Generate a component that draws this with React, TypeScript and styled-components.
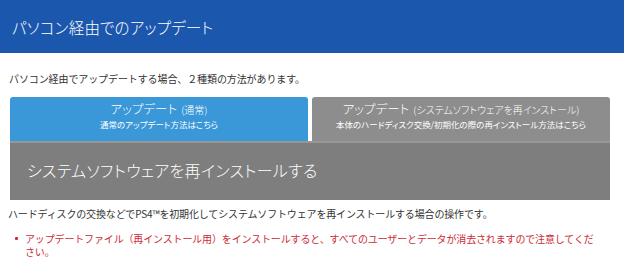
import * as React from "react";
import styled, { createGlobalStyle } from "styled-components";

const GlobalStyle = createGlobalStyle`
  html, body {
    margin: 0;
    padding: 0;
    background: #ffffff;
  }
  body {
    font-family: "Noto Sans CJK JP", "Noto Sans", sans-serif;
    color: #333333;
  }
`;

const SHeader = styled.header`
  height: 53px;
  background: #1c57ae;
  display: flex;
  align-items: center;
  padding: 0 12px;
  box-sizing: border-box;
`;

const STitle = styled.h1`
  margin: 0;
  font-size: 15.5px;
  font-weight: 300;
  font-feature-settings: "palt";
  color: #ffffff;
  letter-spacing: 0.2px;
`;

const SBody = styled.main`
  width: 600px;
  margin-left: 10px;
`;

const SLead = styled.p`
  margin: 18px 0 0 -1px;
  font-size: 10px;
  line-height: 16px;
  letter-spacing: -0.1px;
`;

const STabs = styled.div`
  display: flex;
  gap: 4px;
  margin-top: 10px;
`;

const STab = styled.a<{ $active?: boolean }>`
  flex: 1;
  height: 44px;
  box-sizing: border-box;
  padding-top: 3px;
  border-radius: 3px 3px 0 0;
  background: ${(p) => (p.$active ? "#3a98d8" : "#8d8d8d")};
  color: #ffffff;
  display: flex;
  flex-direction: column;
  align-items: center;
  text-decoration: none;
  font-feature-settings: "palt";
  cursor: pointer;
`;

const STabTitle = styled.span`
  font-size: 12.5px;
  font-weight: 300;
  line-height: 18px;
  & small {
    font-size: 10px;
    margin-left: 4px;
  }
`;

const STabSub = styled.span`
  font-size: 8.5px;
  line-height: 11px;
`;

const SPanel = styled.section`
  height: 59px;
  box-sizing: border-box;
  padding: 0 17px 3px;
  background: #7e7e7e;
  border-top: 2px solid #979797;
  display: flex;
  align-items: center;
`;

const SPanelTitle = styled.h2`
  margin: 0;
  font-size: 16px;
  font-weight: 300;
  font-feature-settings: "palt";
  color: #ffffff;
  letter-spacing: 0.3px;
`;

const SText = styled.p`
  margin: 7px 0 0 -2px;
  font-size: 10px;
  line-height: 14px;
  letter-spacing: -0.15px;
`;

const SNotes = styled.ul`
  margin: 11px 0 0;
  padding: 0 10px 0 15px;
  list-style: none;
`;

const SNote = styled.li`
  position: relative;
  font-size: 10px;
  line-height: 13px;
  letter-spacing: -0.15px;
  color: #cc2b36;
  &::before {
    content: "";
    position: absolute;
    left: -10px;
    top: 5px;
    width: 3px;
    height: 3px;
    border-radius: 1px;
    background: #cc2b36;
  }
`;

const App = () => {
  return (
    <>
      <GlobalStyle />
      <SHeader>
        <STitle>パソコン経由でのアップデート</STitle>
      </SHeader>
      <SBody>
        <SLead>パソコン経由でアップデートする場合、２種類の方法があります。</SLead>
        <STabs>
          <STab $active>
            <STabTitle>
              アップデート<small>(通常)</small>
            </STabTitle>
            <STabSub>通常のアップデート方法はこちら</STabSub>
          </STab>
          <STab>
            <STabTitle>
              アップデート<small>(システムソフトウェアを再インストール)</small>
            </STabTitle>
            <STabSub>本体のハードディスク交換/初期化の際の再インストール方法はこちら</STabSub>
          </STab>
        </STabs>
        <SPanel>
          <SPanelTitle>システムソフトウェアを再インストールする</SPanelTitle>
        </SPanel>
        <SText>
          ハードディスクの交換などでPS4™を初期化してシステムソフトウェアを再インストールする場合の操作です。
        </SText>
        <SNotes>
          <SNote>
            アップデートファイル（再インストール用）をインストールすると、すべてのユーザーとデータが消去されますので注意してください。
          </SNote>
        </SNotes>
      </SBody>
    </>
  );
};

export default App;
